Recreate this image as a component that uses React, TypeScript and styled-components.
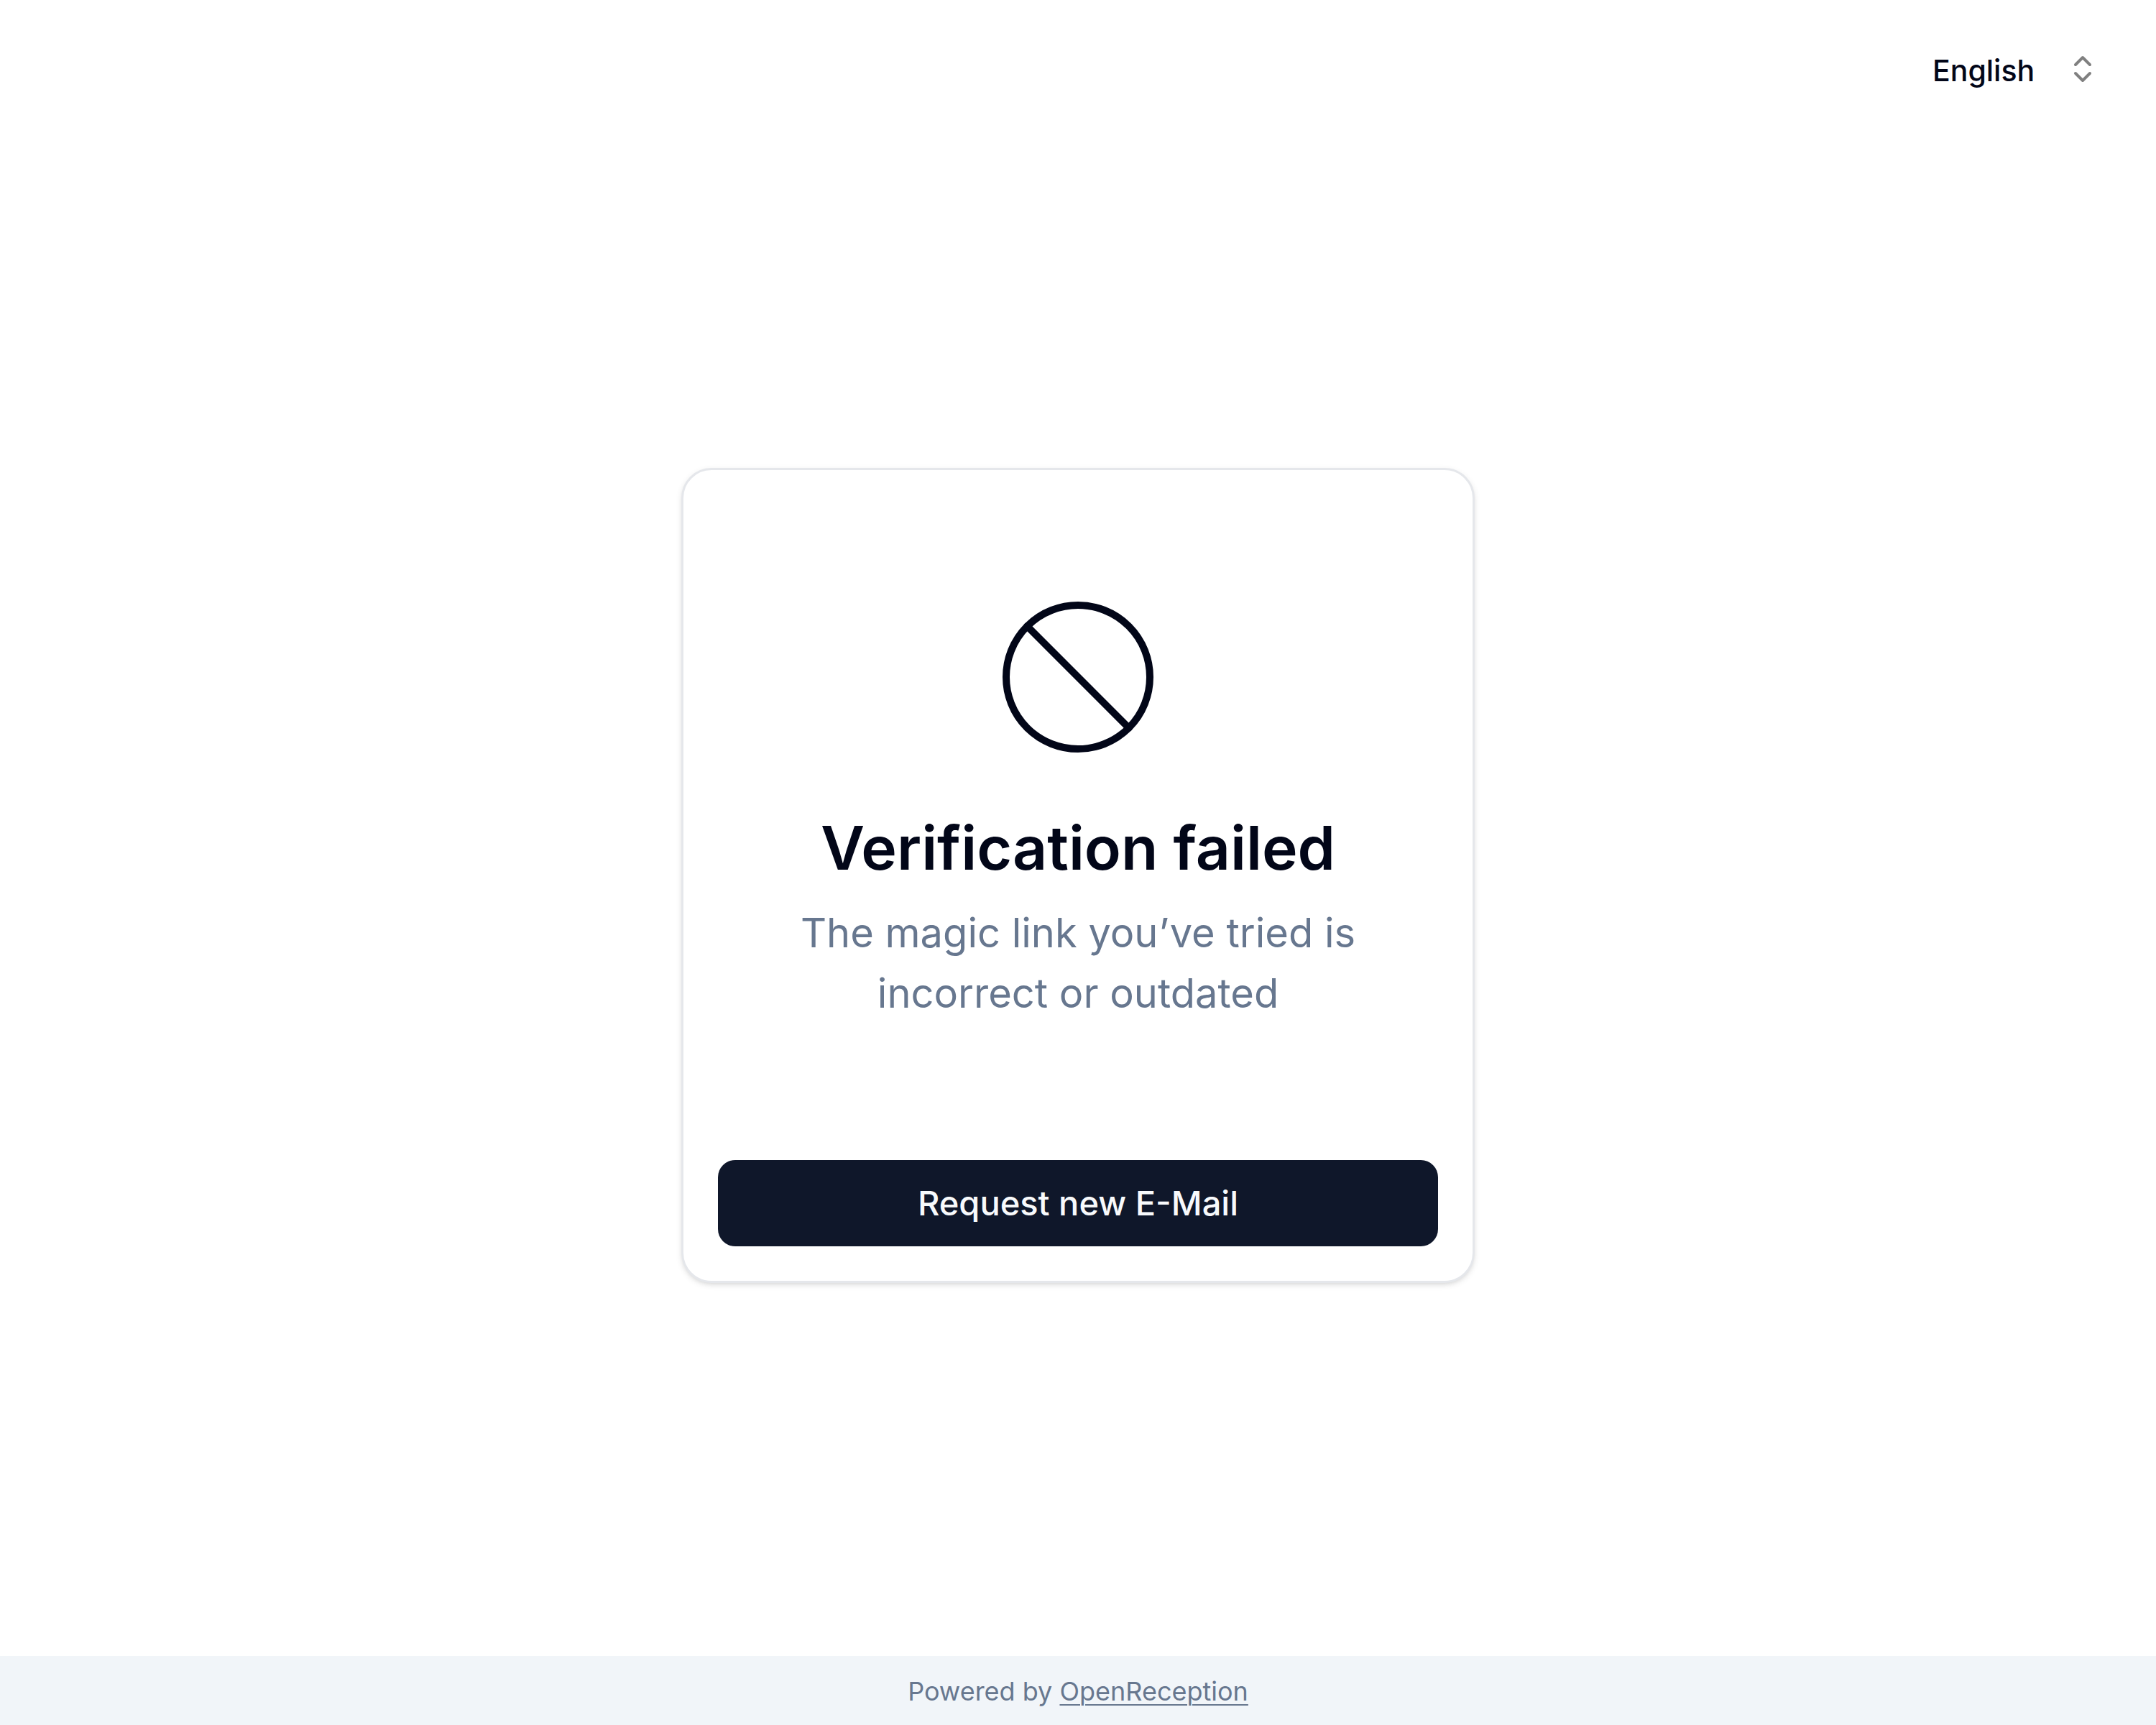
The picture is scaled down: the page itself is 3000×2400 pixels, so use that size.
import React from "react";
import styled, { createGlobalStyle } from "styled-components";
import { Ban, ChevronsUpDown } from "lucide-react";

const color = {
  background: "#ffffff",
  foreground: "#020618",
  muted: "#f1f5f9",
  mutedForeground: "#67778f",
  primary: "#0f172a",
  primaryForeground: "#f8fafc",
  border: "#e5e7eb",
};

const GlobalStyle = createGlobalStyle`
  *, *::before, *::after {
    box-sizing: border-box;
  }
  body {
    margin: 0;
    background: ${color.background};
    color: ${color.foreground};
    font-family: Inter, "Liberation Sans", sans-serif;
    -webkit-font-smoothing: antialiased;
  }
`;

const Page = styled.div`
  display: flex;
  flex-direction: column;
  min-height: 100vh;
`;

const Header = styled.header`
  display: flex;
  justify-content: flex-end;
  padding: 60px 78px 0;
`;

const LanguagePicker = styled.label`
  display: grid;
  align-items: center;
  justify-items: end;

  & > * {
    grid-area: 1 / 1;
  }
  svg {
    color: #808080;
    pointer-events: none;
  }
`;

const LanguageSelect = styled.select`
  appearance: none;
  height: 72px;
  padding: 4px 90px 0 0;
  border: 0;
  background: transparent;
  color: inherit;
  font: 500 41px/60px Inter, "Liberation Sans", sans-serif;
  cursor: pointer;
`;

const Main = styled.main`
  display: flex;
  flex: 1;
  align-items: center;
  justify-content: center;
  padding: 48px;
`;

const Card = styled.section`
  display: flex;
  flex-direction: column;
  gap: 190px;
  width: 100%;
  max-width: 1104px;
  padding: 168px 48px 48px;
  border: 3px solid ${color.border};
  border-radius: 42px;
  background: ${color.background};
  box-shadow: 0 3px 9px rgba(0, 0, 0, 0.1), 0 3px 6px -3px rgba(0, 0, 0, 0.1);
`;

const Message = styled.div`
  display: flex;
  flex-direction: column;
  align-items: center;
  text-align: center;
`;

const Title = styled.h1`
  margin: 64px 0 22px;
  font-size: 84px;
  font-weight: 600;
  line-height: 108px;
`;

const Description = styled.p`
  max-width: 800px;
  margin: 0;
  color: ${color.mutedForeground};
  font-size: 56px;
  line-height: 84px;
`;

const Button = styled.button`
  height: 120px;
  border: 0;
  border-radius: 24px;
  background: ${color.primary};
  color: ${color.primaryForeground};
  font: 500 47px/72px Inter, "Liberation Sans", sans-serif;
  cursor: pointer;
`;

const Footer = styled.footer`
  padding: 25px 24px 23px;
  background: ${color.muted};
  color: ${color.mutedForeground};
  font-size: 36px;
  line-height: 48px;
  text-align: center;
`;

const FooterLink = styled.a`
  color: inherit;
  text-decoration: underline;
  text-decoration-thickness: 2px;
  text-underline-offset: 5px;
`;

export default function App() {
  return (
    <>
      <GlobalStyle />
      <Page>
        <Header>
          <LanguagePicker>
            <LanguageSelect aria-label="Language" defaultValue="en">
              <option value="en">English</option>
            </LanguageSelect>
            <ChevronsUpDown size={48} aria-hidden />
          </LanguagePicker>
        </Header>
        <Main>
          <Card>
            <Message>
              <Ban size={240} strokeWidth={1} aria-hidden />
              <Title>Verification failed</Title>
              <Description>
                The magic link you’ve tried is incorrect or outdated
              </Description>
            </Message>
            <Button type="button">Request new E-Mail</Button>
          </Card>
        </Main>
        <Footer>
          Powered by <FooterLink href="#">OpenReception</FooterLink>
        </Footer>
      </Page>
    </>
  );
}
